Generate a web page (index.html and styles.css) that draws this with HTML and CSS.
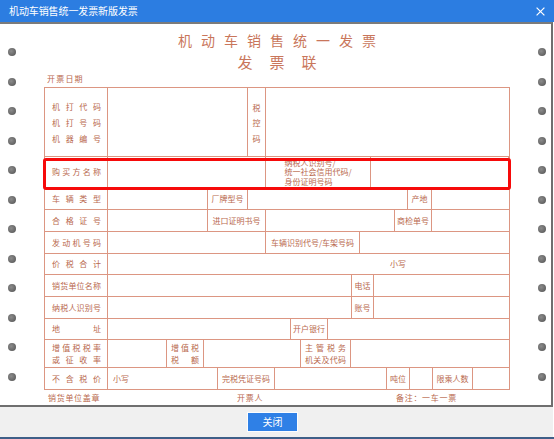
FILE: index.html
```html
<!DOCTYPE html>
<html lang="zh-CN">
<head>
<meta charset="utf-8">
<title>机动车销售统一发票新版发票</title>
<link rel="stylesheet" href="styles.css">
</head>
<body>
<div class="window">
  <div class="titlebar">
    <span class="title">机动车销售统一发票新版发票</span>
    <svg class="close" viewBox="0 0 9 9" width="9" height="9"><path d="M0.6 0.6L8.4 8.4M8.4 0.6L0.6 8.4" stroke="#fff" stroke-width="1.2" fill="none"/></svg>
  </div>
  <div class="main">
    <div class="holes left">
      <i class="hole"></i><i class="hole"></i><i class="hole"></i><i class="hole"></i>
      <i class="hole"></i><i class="hole"></i><i class="hole"></i><i class="hole"></i>
      <i class="hole"></i><i class="hole"></i><i class="hole"></i><i class="hole"></i>
    </div>
    <div class="paper">
      <div class="inv-title">机动车销售统一发票</div>
      <div class="inv-sub">发票联</div>
      <div class="date">开票日期</div>
      <div class="grid">
        <div class="row r1">
          <div class="c lab"><span class="jt">机打代码<br>机打号码<br>机器编号</span></div>
          <div class="c"></div>
          <div class="c lb vert">税<br>控<br>码</div>
          <div class="c"></div>
        </div>
        <div class="row r2">
          <div class="c lab"><span class="jt">购买方名称</span></div>
          <div class="c"></div>
          <div class="c lb"><span class="multi">纳税人识别号/<br>统一社会信用代码/<br>身份证明号码</span></div>
          <div class="c"></div>
          <div class="hl"></div>
        </div>
        <div class="row r3">
          <div class="c lab"><span class="jt">车辆类型</span></div>
          <div class="c"></div>
          <div class="c lb">厂牌型号</div>
          <div class="c"></div>
          <div class="c lb">产地</div>
          <div class="c"></div>
        </div>
        <div class="row r4">
          <div class="c lab"><span class="jt">合格证号</span></div>
          <div class="c"></div>
          <div class="c lb">进口证明书号</div>
          <div class="c"></div>
          <div class="c lb">商检单号</div>
          <div class="c"></div>
        </div>
        <div class="row r5">
          <div class="c lab"><span class="jt">发动机号码</span></div>
          <div class="c"></div>
          <div class="c lb">车辆识别代号/车架号码</div>
          <div class="c"></div>
        </div>
        <div class="row r6">
          <div class="c lab"><span class="jt">价税合计</span></div>
          <div class="c txt small-total">小写</div>
        </div>
        <div class="row r7">
          <div class="c lab"><span class="jt">销货单位名称</span></div>
          <div class="c"></div>
          <div class="c lb">电话</div>
          <div class="c"></div>
        </div>
        <div class="row r7">
          <div class="c lab"><span class="jt">纳税人识别号</span></div>
          <div class="c"></div>
          <div class="c lb">账号</div>
          <div class="c"></div>
        </div>
        <div class="row r9">
          <div class="c lab"><span class="jt">地址</span></div>
          <div class="c"></div>
          <div class="c lb">开户银行</div>
          <div class="c"></div>
        </div>
        <div class="row r10">
          <div class="c lab"><span class="jt">增值税税率<br>或征收率</span></div>
          <div class="c"></div>
          <div class="c lab narrow"><span class="jt">增值税<br>税额</span></div>
          <div class="c"></div>
          <div class="c lab narrow2"><span class="jt">主管税务<br>机关及代码</span></div>
          <div class="c"></div>
        </div>
        <div class="row r11">
          <div class="c lab"><span class="jt">不含税价</span></div>
          <div class="c txt small-price">小写</div>
          <div class="c lb">完税凭证号码</div>
          <div class="c"></div>
          <div class="c lb">吨位</div>
          <div class="c"></div>
          <div class="c lb">限乘人数</div>
          <div class="c"></div>
        </div>
      </div>
      <div class="foot-line">
        <span class="f1">销货单位盖章</span>
        <span class="f2">开票人</span>
        <span class="f3">备注：一车一票</span>
      </div>
    </div>
    <div class="holes right">
      <i class="hole"></i><i class="hole"></i><i class="hole"></i><i class="hole"></i>
      <i class="hole"></i><i class="hole"></i><i class="hole"></i><i class="hole"></i>
      <i class="hole"></i><i class="hole"></i><i class="hole"></i><i class="hole"></i>
    </div>
  </div>
  <div class="footer"><button class="btn">关闭</button></div>
  <div class="taskbar"></div>
</div>
</body>
</html>
```

FILE: styles.css
```css
* { box-sizing: border-box; }
html, body { margin: 0; padding: 0; }
body {
  width: 554px;
  height: 439px;
  overflow: hidden;
  background: #fff;
  font-family: "Noto Sans CJK SC", "Noto Sans", sans-serif;
}
.window { width: 554px; height: 439px; display: flex; flex-direction: column; }

.titlebar {
  height: 22px;
  flex: none;
  background: #2c7de1;
  display: flex;
  align-items: center;
  justify-content: space-between;
  padding: 0 9px 0 9px;
  color: #fff;
}
.title { font-size: 10px; line-height: 12px; letter-spacing: -0.1px; }
.close { display: block; }

.main {
  height: 385px;
  flex: none;
  width: 553px;
  display: flex;
  border-top: 2px solid #7b7b7b;
  border-right: 2px solid #6f6f6f;
  border-bottom: 2px solid #6f6f6f;
  background: #fff;
}

.holes { display: flex; flex-direction: column; gap: 21.5px; padding-top: 24px; }
.holes.left { width: 44px; padding-left: 8px; }
.holes.right { padding-left: 28px; }
.hole {
  display: block;
  width: 8px;
  height: 8px;
  border-radius: 50%;
  background: radial-gradient(circle at 40% 40%, #8c8c8c 0%, #6c6c6c 55%, #4e4e4e 100%);
}

.paper { width: 466px; padding-top: 8px; color: #b9694e; }
.inv-title {
  font-size: 14px;
  line-height: 16px;
  letter-spacing: 9px;
  padding-left: 9px;
  text-align: center;
  color: #c9765b;
}
.inv-sub {
  margin-top: 5px;
  font-size: 15px;
  line-height: 18px;
  letter-spacing: 17px;
  padding-left: 17px;
  text-align: center;
  color: #c9765b;
}
.date {
  margin-top: 3px;
  font-size: 8px;
  line-height: 10px;
  letter-spacing: 1.2px;
  padding-left: 3px;
}

.grid { margin-top: 3px; border: 1px solid #dc9682; width: 466px; }
.row { display: grid; border-bottom: 1px solid #dc9682; }
.row:last-child { border-bottom: 0; }
.r1 { height: 69px; grid-template-columns: 63px 140px 18px 1fr; }
.r2 { height: 31px; grid-template-columns: 63px 158px 105px 1fr; position: relative; }
.r3 { height: 22px; grid-template-columns: 63px 100px 40px 160px 24px 1fr; }
.r4 { height: 22px; grid-template-columns: 63px 100px 58px 129px 37px 1fr; }
.r5 { height: 22px; grid-template-columns: 63px 158px 94px 1fr; }
.r6 { height: 21px; grid-template-columns: 63px 1fr; }
.r7 { height: 22px; grid-template-columns: 63px 244px 22px 1fr; }
.r9 { height: 21px; grid-template-columns: 63px 183px 37px 1fr; }
.r10 { height: 28px; grid-template-columns: 63px 59px 37px 97px 50px 1fr; }
.r11 { height: 21px; grid-template-columns: 63px 110px 57px 112px 23px 23px 40px 1fr; }

.c {
  border-right: 1px solid #dc9682;
  display: flex;
  align-items: center;
  font-size: 8px;
  line-height: 10px;
  min-width: 0;
}
.c:last-of-type { border-right: 0; }
.lab { padding: 0 6px 0 7px; }
.lab.narrow { padding: 0 4px 0 4px; }
.lab.narrow2 { padding: 0 4px 0 4px; }
.jt { flex: 1; text-align: justify; text-align-last: justify; white-space: nowrap; }
.r1 .jt { line-height: 16px; padding-top: 2px; }
.r10 .jt { line-height: 12px; }
.lb { justify-content: center; text-align: center; white-space: nowrap; }
.vert { line-height: 15.5px; padding-top: 2px; }
.multi { display: inline-block; text-align: left; line-height: 9.5px; }
.txt { padding-left: 5px; }
.small-total { padding-left: 282px; }
.small-price { padding-left: 5px; }

.hl {
  position: absolute;
  top: 1px;
  left: -2px;
  width: 468px;
  height: 32px;
  border: 3px solid #f60a0a;
  border-radius: 3px;
}

.foot-line {
  margin-top: 3px;
  display: flex;
  font-size: 8px;
  line-height: 10px;
  letter-spacing: 0.7px;
  padding-left: 4px;
}
.f1 { width: 189px; }
.f2 { width: 159px; }

.footer {
  height: 30px;
  flex: none;
  width: 553px;
  background: #f0f0f0;
  display: flex;
  align-items: center;
  padding-left: 248px;
}
.btn {
  width: 49px;
  height: 18px;
  padding: 0;
  border: 0;
  background: #2f80e6;
  color: #fff;
  font-family: "Noto Sans CJK SC", sans-serif;
  font-size: 10px;
  line-height: 18px;
  box-shadow: 0 0 0 1px #fbfdff;
}
.taskbar { height: 2px; flex: none; background: #3f5f88; }
```
